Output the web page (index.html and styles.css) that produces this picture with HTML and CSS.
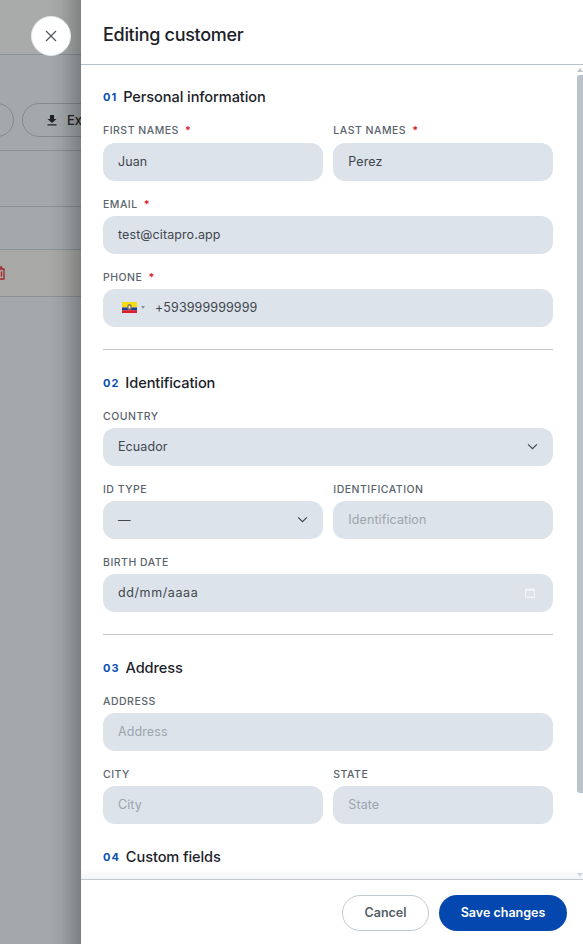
FILE: index.html
```html
<!DOCTYPE html>
<html lang="en">
<head>
<meta charset="utf-8">
<title>Editing customer</title>
<link rel="stylesheet" href="styles.css">
</head>
<body>
<div class="page">
  <div class="page-top"></div>
  <div class="toolbar">
    <span class="pill pill-cut"></span>
    <span class="pill pill-export">
      <svg class="export-icon" viewBox="0 0 12 12" width="12" height="12"><path d="M4 1h4v4h2.500L6 9 1.500 5H4zM1.500 10.200h9v1.300h-9z" fill="#222"/></svg>
      Export
    </span>
  </div>
  <div class="table-head"></div>
  <div class="table-row">
    <svg class="trash" viewBox="0 0 10 14" width="10" height="14"><path d="M1 3h8v10H1zM3.500 3V1h3v2M3.500 5.500v5M6.500 5.500v5" fill="none" stroke="#a32626" stroke-width="1.300"/></svg>
  </div>
</div>
<div class="shade"></div>
<button class="close" type="button" aria-label="Close">
  <svg viewBox="0 0 12 12" width="12" height="12"><path d="M1 1l10 10M11 1L1 11" stroke="#4a5159" stroke-width="1.100" fill="none"/></svg>
</button>
<aside class="drawer">
  <header class="drawer-head"><h1>Editing customer</h1></header>
  <div class="drawer-body">
    <div class="scroll">
      <section class="section">
        <h2 class="section-title"><span class="num">01</span>Personal information</h2>
        <div class="fields">
          <div class="row">
            <div class="field"><label>FIRST NAMES<i>*</i></label><div class="input">Juan</div></div>
            <div class="field"><label>LAST NAMES<i>*</i></label><div class="input">Perez</div></div>
          </div>
          <div class="field"><label>EMAIL<i>*</i></label><div class="input">test@citapro.app</div></div>
          <div class="field"><label>PHONE<i>*</i></label>
            <div class="input phone">
              <svg class="flag" viewBox="0 0 15 11" width="15" height="11"><rect width="15" height="5.500" fill="#f5dc10"/><rect y="5.500" width="15" height="2.700" fill="#1c3f9e"/><rect y="8.200" width="15" height="2.800" fill="#d81e2c"/><ellipse cx="7.500" cy="5" rx="2.300" ry="3" fill="#8d7a55"/><ellipse cx="7.500" cy="5" rx="1" ry="1.500" fill="#dfe3dc"/></svg>
              <span class="caret"></span>
              <span>+593999999999</span>
            </div>
          </div>
        </div>
      </section>
      <section class="section ruled">
        <h2 class="section-title"><span class="num">02</span>Identification</h2>
        <div class="fields">
          <div class="field"><label>COUNTRY</label>
            <div class="input select">Ecuador<svg viewBox="0 0 12 8" width="11" height="7"><path d="M1 1.500l5 5 5-5" fill="none" stroke="#3f4750" stroke-width="1.300"/></svg></div>
          </div>
          <div class="row">
            <div class="field"><label>ID TYPE</label>
              <div class="input select">—<svg viewBox="0 0 12 8" width="11" height="7"><path d="M1 1.500l5 5 5-5" fill="none" stroke="#3f4750" stroke-width="1.300"/></svg></div>
            </div>
            <div class="field"><label>IDENTIFICATION</label><div class="input placeholder">Identification</div></div>
          </div>
          <div class="field"><label>BIRTH DATE</label>
            <div class="input select date">dd/mm/aaaa<svg viewBox="0 0 10 11" width="10" height="11"><path d="M0 1.500h10V11H0zM1.200 4v5.800h7.600V4z" fill="#f1f4f7" fill-rule="evenodd"/></svg></div>
          </div>
        </div>
      </section>
      <section class="section ruled">
        <h2 class="section-title"><span class="num">03</span>Address</h2>
        <div class="fields">
          <div class="field"><label>ADDRESS</label><div class="input placeholder">Address</div></div>
          <div class="row">
            <div class="field"><label>CITY</label><div class="input placeholder">City</div></div>
            <div class="field"><label>STATE</label><div class="input placeholder">State</div></div>
          </div>
        </div>
      </section>
      <section class="section">
        <h2 class="section-title"><span class="num">04</span>Custom fields</h2>
      </section>
    </div>
    <div class="fade"></div>
    <div class="scrollbar">
      <span class="arrow up"></span>
      <span class="thumb"></span>
      <span class="arrow down"></span>
    </div>
  </div>
  <footer class="drawer-foot">
    <button class="btn ghost" type="button">Cancel</button>
    <button class="btn primary" type="button">Save changes</button>
  </footer>
</aside>
</body>
</html>
```
FILE: styles.css
```css
* { box-sizing: border-box; }
html, body { margin: 0; height: 100%; overflow: hidden; }
body { font-family: Inter, "Liberation Sans", sans-serif; color: #1d232a; background: #a3a8ab; }

.page { height: 944px; background: #a3a8ab; }
.page-top { height: 55px; background: #a9abab; border-bottom: 1px solid #8c9194; }
.toolbar { height: 96px; padding-top: 48px; display: flex; gap: 8px; border-bottom: 1px solid #8c9194; margin-left: -30px; }
.pill { height: 34px; border: 1px solid #868b8e; border-radius: 17px; display: flex; align-items: center; font-size: 13px; color: #222; }
.pill-cut { width: 44px; }
.pill-export { width: 120px; padding-left: 23px; gap: 9px; font-weight: 500; }
.table-head { height: 56px; border-bottom: 1px solid #8c9194; }
.table-row { margin-top: 42px; height: 48px; background: #a8a9a7; border-top: 1px solid #8c9194; border-bottom: 1px solid #8c9194; display: flex; align-items: center; }
.trash { margin-left: -5px; }

.shade { position: fixed; inset: 0 502px 0 0; background: linear-gradient(90deg, rgba(0,0,0,0) 50px, rgba(0,0,0,.05) 62px, rgba(0,0,0,.24) 81px); }

.close { position: fixed; left: 31px; top: 16px; width: 40px; height: 40px; border-radius: 50%; border: 1px solid #e6e9ec; background: #fff; display: flex; align-items: center; justify-content: center; padding: 0; }

.drawer { position: fixed; top: 0; left: 81px; bottom: 0; width: 502px; background: #fff; display: flex; flex-direction: column; }
.drawer-head { flex: none; height: 65px; padding: 0 22px; border-bottom: 1px solid #b6c1cc; display: flex; align-items: center; }
.drawer-head h1 { margin: 5px 0 0; font-size: 18px; font-weight: 500; letter-spacing: -.3px; color: #1b2229; }

.drawer-body { flex: 1; min-height: 0; display: flex; position: relative; }
.scroll { width: 487px; padding: 0 15px 0 22px; overflow: hidden; }
.fade { position: absolute; left: 0; right: 0; bottom: 0; height: 10px; background: linear-gradient(180deg, rgba(240,242,244,0), rgba(240,242,244,.8)); }
.scrollbar { flex: 1; display: flex; flex-direction: column; align-items: flex-end; }
.thumb { width: 6px; height: 718px; background: #bbc4cd; border-radius: 3px 0 0 3px; margin-top: 3px; }
.arrow { width: 0; height: 0; border-left: 3px solid transparent; border-right: 3px solid transparent; }
.arrow.up { border-bottom: 4px solid #bbc4cd; margin-top: 3px; }
.arrow.down { border-top: 4px solid #bbc4cd; margin-top: auto; margin-bottom: 2px; }

.section { padding-top: 24px; }
.section:first-child { padding-top: 23px; }
.section.ruled { margin-top: 22px; border-top: 1px solid #c4c9ce; }
.section-title { margin: 0; height: 18px; display: flex; align-items: center; font-size: 14.600px; font-weight: 450; color: #1b2229; letter-spacing: -.1px; }
.num { font-size: 11px; font-weight: 650; color: #0b4fb3; letter-spacing: 1px; margin-right: 6px; }

.fields { margin-top: 19px; display: flex; flex-direction: column; gap: 18px; }
.section:first-child .row label { margin-bottom: 6px; }
.row { display: grid; grid-template-columns: 1fr 1fr; gap: 10.600px; }
label { display: block; height: 12px; line-height: 12px; margin-bottom: 5px; font-size: 10.500px; font-weight: 500; letter-spacing: .5px; color: #5a636c; }
label i { font-style: normal; color: #d8222c; font-weight: 700; margin-left: 6px; }
.input { height: 38px; border-radius: 12px; background: #dce3ea; display: flex; align-items: center; padding: 0 15px 1px; font-size: 12.500px; letter-spacing: .1px; color: #3f464e; }
.placeholder { color: #9da5ad; }
.select { justify-content: space-between; padding-right: 15px; }
.date { padding-right: 18px; letter-spacing: .6px; }
.phone { padding-left: 19px; }
.flag { flex: none; }
.caret { width: 0; height: 0; margin: 0 10px 0 4px; border-left: 2.500px solid transparent; border-right: 2.500px solid transparent; border-top: 3px solid #8d959c; }

.drawer-foot { flex: none; height: 65px; border-top: 1px solid #c4c9ce; display: flex; justify-content: flex-end; align-items: center; gap: 10px; padding: 2px 16px 0 0; }
.btn { height: 36px; border-radius: 18px; padding: 0 0 2px; font-family: inherit; font-size: 12.500px; font-weight: 600; }
.ghost { width: 87px; background: #fff; border: 1px solid #c1c9d1; color: #555d66; }
.primary { width: 128px; background: #0447ae; border: 0; color: #fff; }
```
